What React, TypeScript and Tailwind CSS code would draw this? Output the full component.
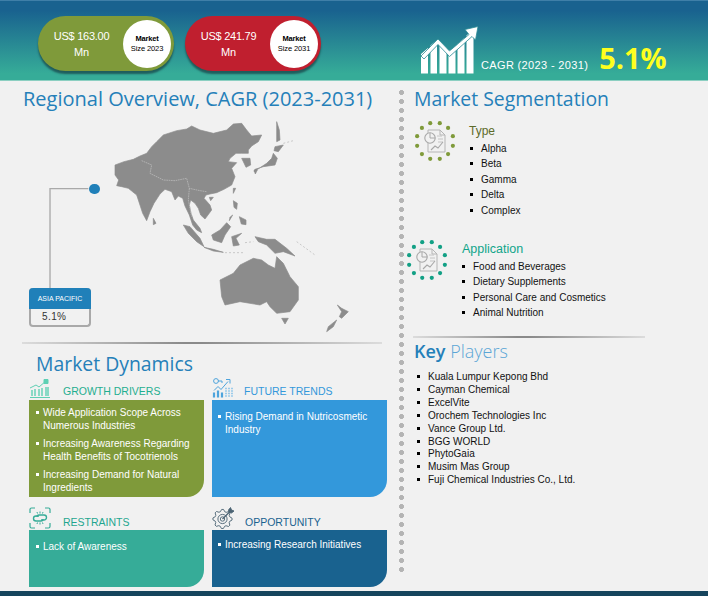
import type { ReactNode } from 'react';

const DOT_ANGLES = [0, 1, 2, 3, 4, 5, 6, 7, 8, 9, 10, 11];

// outline of the cog in the opportunity icon
const GEAR_POINTS = Array.from({ length: 32 }, (_, i) => {
  const a = ((i * 11.25 - 5) * Math.PI) / 180;
  const r = i % 4 < 2 ? 9.6 : 7.6;
  return `${(10.500 + r * Math.cos(a)).toFixed(2)},${(12 + r * Math.sin(a)).toFixed(2)}`;
}).join(' ');

const DocIcon = ({ color }: { color: string }) => (
  <svg viewBox="0 0 42 42" className="w-[42px] h-[42px]" fill="none">
    {DOT_ANGLES.map((i) => {
      const a = ((i * 30 - 75) * Math.PI) / 180;
      return <circle key={i} cx={21 + 18.5 * Math.cos(a)} cy={21 + 18.5 * Math.sin(a)} r="2.1" fill={color} />;
    })}
    <path d="M14 10h12l5 5v17H14z" stroke="#b5b5b5" strokeWidth="1" fill="#f1f1f1" />
    <path d="M26 10v5h5" stroke="#b5b5b5" strokeWidth="1" />
    <circle cx="16" cy="18" r="5.2" fill="#f1f1f1" stroke="#a8a8a8" strokeWidth="1.1" />
    <path d="M16 18v-5.2M16 18h5.2" stroke="#a8a8a8" strokeWidth="1" />
    <path d="M23 16h5M24 19h5M24 22h5" stroke="#c4c4c4" strokeWidth="1" />
    <path d="M17 30l4-4 3 2 5-6" stroke="#a8a8a8" strokeWidth="1.1" />
  </svg>
);

const GrowthIcon = () => (
  <svg viewBox="0 0 22 20" className="w-[22px] h-[20px]" fill="none" stroke="#5fd0b4" strokeWidth="1">
    <path d="M1 19.5h20" />
    <path d="M3 18v-6M6 18v-7M10 18v-7M13 18v-8M17 18V9M19 18V9" strokeWidth="1.4" />
    <path d="M1 10l6-3 3 2 7-6" />
    <path d="M15 1.5h4v4h-4z" fill="#5fd0b4" />
  </svg>
);

const TrendIcon = () => (
  <svg viewBox="0 0 22 20" className="w-[22px] h-[21px]" fill="none" stroke="#4ea4dc" strokeWidth="1">
    <circle cx="4" cy="3.5" r="2.4" />
    <path d="M6 3.5h4v2" />
    <path d="M2 13l4-4 3 3 7-8" />
    <path d="M14 2h4v4" />
    <path d="M2 20v-5M6 20v-7M10 20v-5" strokeWidth="2.2" />
    <path d="M13 11h8M13 13.5h8M13 16h8M13 18.5h8" strokeWidth="1.4" strokeDasharray="2 1" stroke="#9ccbea" />
  </svg>
);

const ChainIcon = () => (
  <svg viewBox="0 0 22 22" className="w-[22px] h-[22px]" fill="none" stroke="#36ac98" strokeWidth="1.2">
    <path d="M1 6V2.5A1.5 1.5 0 0 1 2.5 1H6M16 1h3.5A1.5 1.5 0 0 1 21 2.5V6M21 16v3.5a1.5 1.5 0 0 1-1.5 1.5H16M6 21H2.5A1.5 1.5 0 0 1 1 19.5V16" />
    <path d="M10 9H7a2.5 2.5 0 0 0 0 5h5a2 2 0 0 0 2-2" strokeWidth="1.4" />
    <path d="M12 13h3a2.5 2.5 0 0 0 0-5h-5a2 2 0 0 0-2 2" strokeWidth="1.4" />
    <path d="M8 5l.5 1.5M11 4.500v2M14 5l-.5 1.5M8 17l.5-1.500M11 17.500v-2M14 17l-.5-1.500" strokeWidth="1" />
  </svg>
);

const TargetGearIcon = () => (
  <svg viewBox="0 0 23 22" className="w-[23px] h-[22px]" fill="none" stroke="#4a6272" strokeWidth="0.9">
    <polygon points={GEAR_POINTS} strokeLinejoin="round" />
    <circle cx="10.500" cy="12" r="4.600" />
    <circle cx="10.500" cy="12" r="2.200" />
    <path d="M10.500 12l8-8" strokeWidth="1.200" />
    <path d="M16.500 3l2-2.500 1 2.500 2.500 1-2.500 2-2.500-1z" fill="#4a6272" />
  </svg>
);

const CagrIcon = () => (
  <svg viewBox="0 0 58 50" className="w-[58px] h-[50px]" fill="#ffffff">
    <path d="M1 47.500V28l7-6v25.500zM10.500 47.500V19.500L17 14v33.500zM19.500 47.500V15l7 7v25.500zM28.500 47.500V25l7-3v25.500zM37.500 47.500V18l7-6v35.500zM46.500 47.500V9.500l7-6v44z" />
    <path d="M1 30L18 13l11.500 12L49 8.500l-4-5L58 0.500l-2.500 13.500-3.500-3.500L29.500 30.500 18 18.500 4 33z" stroke="#2b8c96" strokeWidth="0.800" />
  </svg>
);

const AsiaMap = () => (
  <svg viewBox="0 0 1170 690" className="w-[390px] h-[230px]" fill="#8c8c8c" stroke="#8c8c8c" strokeWidth="2" strokeLinejoin="round">
    <path d="M345 135 372 125 400 118 420 108 440 100 455 80 470 65 490 45 530 32 560 27 575 18 600 30 640 40 680 30 700 12 725 10 740 30 755 48 785 45 775 65 755 78 745 90 745 100 725 100 708 100 690 115 685 125 710 128 695 145 705 170 695 195 672 208 650 218 630 222 618 225 612 235 630 255 635 270 615 297 602 285 595 265 585 250 572 240 568 255 573 280 580 300 600 325 605 338 590 330 578 315 568 285 555 258 548 235 535 228 525 240 515 215 495 208 480 222 462 250 450 275 440 302 428 280 415 240 410 225 385 205 365 200 350 197 356 180 345 165Z" />
    <path d="M725 115 750 115 752 135 738 142 730 125Z" />
    <path d="M830 5 838 30 840 60 830 65 830 30Z" />
    <path d="M825 80 850 75 835 95 822 92Z" />
    <path d="M820 100 832 115 825 135 790 140 765 148 762 155 800 130 815 115Z" />
    <path d="M762 150 772 150 766 162Z" />
    <path d="M460 295 468 310 460 314Z" />
    <path d="M700 205 707 205 700 220Z" />
    <path d="M628 232 640 232 632 242Z" />
    <path d="M700 242 712 250 710 268 702 262Z" />
    <path d="M718 290 738 300 738 314 724 312Z" />
    <path d="M690 292 698 285 688 302Z" />
    <path d="M635 345 660 330 680 308 692 320 675 345 665 368 640 360Z" />
    <path d="M550 315 570 320 600 355 612 380 590 365 565 340Z" />
    <path d="M612 382 640 388 670 397 640 393Z" />
    <path d="M695 350 725 340 708 355 718 375 700 378Z" />
    <path d="M765 350 800 358 825 358 860 385 885 408 850 395 825 400 800 375 775 365Z" />
    <path d="M660 480 700 460 720 435 760 415 785 420 805 435 825 445 830 410 850 430 870 470 895 500 895 540 870 575 830 580 810 560 800 545 780 555 720 545 675 555 665 530Z" />
    <path d="M845 595 865 595 855 612Z" />
    <path d="M1012 555 1025 565 1045 575 1025 595 1018 590 1025 575Z" />
    <path d="M1010 600 1000 620 980 635 985 620Z" />
    <path d="M425 122 455 135 450 160 490 180 525 182 560 175 568 205 600 212 620 215M568 205 565 240 575 290" fill="none" stroke="#c2c2c2" strokeWidth="2" strokeDasharray="5 2" />
    <path d="M735 368 760 365M675 398 735 398M890 365 945 405M850 70 880 62" fill="none" stroke="#b4b4b4" strokeWidth="2" strokeDasharray="6 6" />
    <path d="M150 505V206H265" fill="none" stroke="#a9a9a9" strokeWidth="4" strokeLinejoin="miter" />
  </svg>
);

const Divider = ({ className }: { className: string }) => (
  <div className={`h-[2px] bg-[linear-gradient(90deg,#dcdcdc,#8a8a8a_45%,#8a8a8a_50%,#dcdcdc)] ${className}`} />
);

const Heading = ({ className, children }: { className: string; children: ReactNode }) => (
  <h2 className={`leading-[24px] font-['Open_Sans',sans-serif] whitespace-nowrap ${className}`}>{children}</h2>
);

const Pill = ({ value, label, year, className }: { value: string; label: string; year: string; className: string }) => (
  <div className={`w-[136px] h-[55px] rounded-full flex items-center justify-between pr-[3px] shadow-[0_3px_2px_#1f5d5c] ${className}`}>
    <div className="flex-1 pl-[2px] text-center text-white text-[11px] leading-[16px] tracking-[-0.25px]">
      <div>{value}</div>
      <div>Mn</div>
    </div>
    <div className="w-[48px] h-[48px] rounded-full bg-white flex flex-col items-center justify-center text-[7.5px] leading-[10px] text-black">
      <span className="font-bold tracking-[-0.2px]">{label}</span>
      <span className="tracking-[-0.1px]">{year}</span>
    </div>
  </div>
);

const DynamicsCard = ({
  icon,
  iconClass,
  title,
  titleColor,
  bg,
  items,
  headClass,
  bodyClass,
}: {
  icon: ReactNode;
  iconClass: string;
  title: string;
  titleColor: string;
  bg: string;
  items: string[][];
  headClass: string;
  bodyClass: string;
}) => (
  <div className="w-[175px]">
    <div className={`flex items-end ${headClass}`}>
      <div className={`shrink-0 ${iconClass}`}>{icon}</div>
      <span className={`text-[10.5px] leading-[14px] whitespace-nowrap ${titleColor}`}>{title}</span>
    </div>
    <div className={`rounded-br-[17px] text-white ${bg} ${bodyClass}`}>
      {items.map((lines) => (
        <div key={lines[0]} className="flex mb-[5px]">
          <span className="w-[3px] h-[3px] bg-white mt-[5px] mr-[4px] shrink-0" />
          <span className="text-[10px] leading-[13px] whitespace-nowrap">
            {lines.map((l) => (
              <div key={l}>{l}</div>
            ))}
          </span>
        </div>
      ))}
    </div>
  </div>
);

const BulletList = ({ items, rowClass }: { items: string[]; rowClass: string }) => (
  <ul>
    {items.map((item) => (
      <li key={item} className={`flex items-center text-[10px] text-[#111] ${rowClass}`}>
        <span className="w-[3px] h-[3px] bg-black mr-[8px] shrink-0" />
        {item}
      </li>
    ))}
  </ul>
);

export default function App() {
  return (
    <div className="w-[711px] h-[598px] bg-white overflow-hidden font-['Liberation_Sans',sans-serif]">
      <div className="w-[708px] h-[596px] bg-[#f1f1f1] flex flex-col">
        {/* Top band */}
        <header className="h-[81px] shrink-0 border-t border-t-[#3f7fa8] border-b border-b-[#8ccfc1] bg-[linear-gradient(180deg,#19628f_12%,#36ac98_92%)] flex">
          <div className="flex gap-[11px] pl-[38px] pt-[15px]">
            <Pill value="US$ 163.00" label="Market" year="Size 2023" className="bg-[#7f9a3a]" />
            <Pill value="US$ 241.79" label="Market" year="Size 2031" className="bg-[#c01f2f]" />
          </div>
          <div className="flex items-end ml-[99px] pb-[4px]">
            <CagrIcon />
            <span className="ml-[3px] mb-[4px] text-white text-[11px] leading-[14px] tracking-[0.35px] whitespace-nowrap">CAGR (2023 - 2031)</span>
            <span className="ml-[11px] mb-[1px] text-[#ffff1e] text-[29px] leading-[34px] font-bold font-['Open_Sans',sans-serif]">5.1%</span>
          </div>
        </header>

        <div className="flex flex-1 min-h-0">
          {/* Left column */}
          <div className="w-[397px] shrink-0">
            <Heading className="ml-[23px] mt-[6px] text-[20px] text-[#2580b9]">Regional Overview, CAGR (2023-2031)</Heading>
            <div className="relative h-[231px]">
              <div className="absolute left-0 top-[9px]">
                <AsiaMap />
              </div>
              <div className="absolute left-[89px] top-[73px] w-[11px] h-[10px] rounded-full bg-[#2080b9]" />
              <div className="absolute left-[29px] top-[177px] w-[62px] h-[39px] rounded-[4px] border-2 border-t-0 border-[#a9a9a9]">
                <div className="-mx-[2px] h-[21px] rounded-t-[4px] bg-[#2080b9] text-white text-[7px] leading-[21px] text-center">ASIA PACIFIC</div>
                <div className="pl-[11px] text-[10px] leading-[16px] tracking-[0.4px] text-[#333]">5.1%</div>
              </div>
            </div>
            <Divider className="ml-[22px] w-[360px]" />
            <Heading className="ml-[36px] mt-[8px] text-[19.4px] text-[#2580b9]">Market Dynamics</Heading>
            <div className="ml-[29px] flex gap-[8px]">
              <DynamicsCard
                icon={<GrowthIcon />}
                iconClass="w-[34px]"
                title="GROWTH DRIVERS"
                titleColor="text-[#1fae8f]"
                bg="bg-[#7f9a3a]"
                headClass="h-[22px] mb-[2px]"
                bodyClass="h-[97px] pl-[7px] pt-[6px]"
                items={[
                  ['Wide Application Scope Across', 'Numerous Industries'],
                  ['Increasing Awareness Regarding', 'Health Benefits of Tocotrienols'],
                  ['Increasing Demand for Natural', 'Ingredients'],
                ]}
              />
              <DynamicsCard
                icon={<TrendIcon />}
                iconClass="w-[32px]"
                title="FUTURE TRENDS"
                titleColor="text-[#3398db]"
                bg="bg-[#3398db]"
                headClass="h-[22px] mb-[2px]"
                bodyClass="h-[97px] pl-[6px] pt-[10px]"
                items={[['Rising Demand in Nutricosmetic', 'Industry']]}
              />
            </div>
            <div className="ml-[29px] mt-[6px] flex gap-[8px]">
              <DynamicsCard
                icon={<ChainIcon />}
                iconClass="w-[34px]"
                title="RESTRAINTS"
                titleColor="text-[#1fa68f]"
                bg="bg-[#36ac98]"
                headClass="h-[26px] mb-[1px]"
                bodyClass="h-[57px] pl-[7px] pt-[10px]"
                items={[['Lack of Awareness']]}
              />
              <DynamicsCard
                icon={<TargetGearIcon />}
                iconClass="w-[33px]"
                title="OPPORTUNITY"
                titleColor="text-[#19628f]"
                bg="bg-[#19628f]"
                headClass="h-[26px] mb-[1px]"
                bodyClass="h-[57px] pl-[6px] pt-[8px]"
                items={[['Increasing Research Initiatives']]}
              />
            </div>
          </div>

          {/* Dotted separator */}
          <div className="w-[9px] h-[486px] mt-[7px] shrink-0 bg-[radial-gradient(circle,#b4b4b4_2.2px,transparent_2.8px)] bg-[length:9px_9px]" />

          {/* Right column */}
          <div className="flex-1 pl-[8px] min-w-0">
            <Heading className="mt-[6px] text-[19.4px] text-[#2580b9]">Market Segmentation</Heading>
            <div className="flex mt-[9px]">
              <DocIcon color="#7f9a3a" />
              <div className="ml-[13px] mt-[3px]">
                <div className="text-[12px] leading-[16px] text-[#5d6b2a]">Type</div>
                <div className="ml-[1px] mt-[1.5px]">
                  <BulletList rowClass="h-[15.500px]" items={['Alpha', 'Beta', 'Gamma', 'Delta', 'Complex']} />
                </div>
              </div>
            </div>
            <div className="flex mt-[21px] -ml-[8px]">
              <DocIcon color="#12a085" />
              <div className="ml-[14px] mt-[2px]">
                <div className="text-[12.5px] leading-[16px] text-[#10a58a]">Application</div>
                <div className="mt-[2px]">
                  <BulletList rowClass="h-[15.300px]" items={['Food and Beverages', 'Dietary Supplements', 'Personal Care and Cosmetics', 'Animal Nutrition']} />
                </div>
              </div>
            </div>
            <Divider className="w-[232px] mt-[16px] -ml-[1px]" />
            <Heading className="mt-[1px] text-[18px] text-[#5ba6d6] font-light">
              <span className="font-semibold text-[#2580b9]">Key</span> Players
            </Heading>
            <div className="ml-[3px] mt-[7px]">
              <BulletList
                rowClass="h-[12.900px]"
                items={[
                  'Kuala Lumpur Kepong Bhd',
                  'Cayman Chemical',
                  'ExcelVite',
                  'Orochem Technologies Inc',
                  'Vance Group Ltd.',
                  'BGG WORLD',
                  'PhytoGaia',
                  'Musim Mas Group',
                  'Fuji Chemical Industries Co., Ltd.',
                ]}
              />
            </div>
          </div>
        </div>

        <div className="h-[5px] shrink-0 bg-[#15445c]" />
      </div>
    </div>
  );
}
